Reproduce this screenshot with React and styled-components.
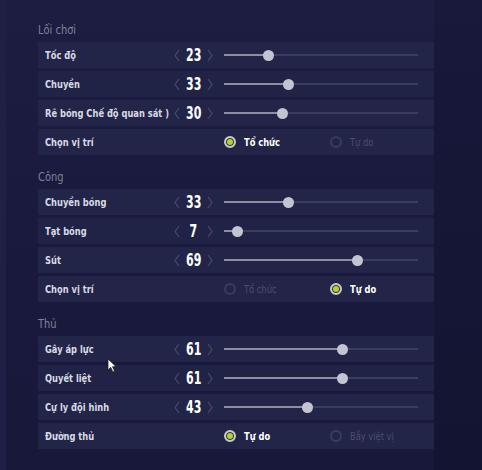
import React from 'react';
import styled, { createGlobalStyle } from 'styled-components';

const GlobalStyle = createGlobalStyle`
  html, body {
    margin: 0;
    padding: 0;
    background: #16173a;
  }
  body {
    font-family: "DejaVu Sans Condensed", "DejaVu Sans", sans-serif;
  }
`;

const sections = [
  {
    title: 'Lối chơi',
    rows: [
      { label: 'Tốc độ', value: 23 },
      { label: 'Chuyền', value: 33 },
      { label: 'Rê bóng Chế độ quan sát )', value: 30 },
    ],
    choice: { label: 'Chọn vị trí', options: ['Tổ chức', 'Tự do'], selected: 0 },
  },
  {
    title: 'Công',
    rows: [
      { label: 'Chuyền bóng', value: 33 },
      { label: 'Tạt bóng', value: 7 },
      { label: 'Sút', value: 69 },
    ],
    choice: { label: 'Chọn vị trí', options: ['Tổ chức', 'Tự do'], selected: 1 },
  },
  {
    title: 'Thủ',
    rows: [
      { label: 'Gây áp lực', value: 61 },
      { label: 'Quyết liệt', value: 61 },
      { label: 'Cự ly đội hình', value: 43 },
    ],
    choice: { label: 'Đường thủ', options: ['Tự do', 'Bẫy việt vị'], selected: 0 },
  },
];

const Page = styled.div`
  position: relative;
  display: flex;
  width: 482px;
  height: 470px;
  overflow: hidden;
`;

const Panel = styled.div`
  width: 434px;
  padding: 20px 0 0 32px;
  box-sizing: border-box;
  background: linear-gradient(180deg, #1c1d41 0%, #19193d 60%, #17183a 100%);
  border-left: 6px solid #1f2045;
`;

const Side = styled.div`
  flex: 1;
  background: linear-gradient(180deg, #18193b 0%, #131431 100%);
`;

const Section = styled.section`
  margin-bottom: 12px;
`;

const Title = styled.div`
  height: 22px;
  line-height: 20px;
  color: #7f8199;
  font-size: 12.5px;
  transform: scaleX(0.88);
  transform-origin: left center;
`;

const Rows = styled.div`
  display: flex;
  flex-direction: column;
  gap: 3px;
`;

const Row = styled.div`
  display: grid;
  grid-template-columns: 125px 54px 1fr;
  align-items: center;
  height: 26px;
  padding-left: 7px;
  background: ${(p) => (p.alt ? '#212346' : '#232548')};
`;

const Label = styled.span`
  color: #d9dae4;
  font-size: 11px;
  font-weight: bold;
  white-space: nowrap;
  display: inline-block;
  transform: scaleX(0.84);
  transform-origin: left center;
`;

const Stepper = styled.div`
  display: flex;
  align-items: center;
  justify-content: space-between;
  padding: 0 11px 0 4px;
`;

const Value = styled.span`
  color: #ffffff;
  font-size: 17px;
  font-weight: bold;
  display: inline-block;
  transform: scaleX(0.72);
  line-height: 1;
`;

const SliderWrap = styled.div`
  position: relative;
  height: 12px;
  margin-right: 16px;
  display: flex;
  align-items: center;
`;

const Track = styled.div`
  width: 100%;
  height: 2px;
  background: #3b3d60;
  position: relative;
`;

const Fill = styled.div`
  height: 100%;
  background: #8c8ea3;
`;

const Thumb = styled.div`
  position: absolute;
  top: 50%;
  width: 11px;
  height: 11px;
  margin: -5.5px 0 0 -5.5px;
  border-radius: 50%;
  background: #c3c4d1;
`;

const Options = styled.div`
  display: flex;
`;

const Option = styled.div`
  width: 106px;
  display: flex;
  align-items: center;
`;

const Dot = styled.span`
  width: 8px;
  height: 8px;
  border-radius: 50%;
  border: 2px solid ${(p) => (p.on ? '#c9cac8' : '#3a3c5e')};
  background: ${(p) => (p.on ? '#b3d232' : 'transparent')};
  box-shadow: ${(p) => (p.on ? 'inset 0 0 0 1px #2b2d44' : 'none')};
  flex-shrink: 0;
`;

const OptionText = styled.span`
  color: ${(p) => (p.on ? '#ffffff' : '#4b4d6f')};
  font-size: 11px;
  font-weight: ${(p) => (p.on ? 'bold' : 'normal')};
  display: inline-block;
  white-space: nowrap;
  transform: scaleX(0.84);
  transform-origin: left center;
  margin-left: 8px;
`;

const Cursor = styled.svg`
  position: absolute;
  left: 107px;
  top: 358px;
`;

function Chevron({ dir }) {
  const pts = dir === 'left' ? '5,1 1,6.5 5,12' : '1,1 5,6.5 1,12';
  return (
    <svg width="6" height="13" viewBox="0 0 6 13">
      <polyline points={pts} fill="none" stroke="#484a6d" strokeWidth="1.2" />
    </svg>
  );
}

function SliderRow({ label, value, alt }) {
  return (
    <Row alt={alt}>
      <Label>{label}</Label>
      <Stepper>
        <Chevron dir="left" />
        <Value>{value}</Value>
        <Chevron dir="right" />
      </Stepper>
      <SliderWrap>
        <Track>
          <Fill style={{ width: `${value}%` }} />
        </Track>
        <Thumb style={{ left: `${value}%` }} />
      </SliderWrap>
    </Row>
  );
}

function ChoiceRow({ label, options, selected }) {
  return (
    <Row>
      <Label>{label}</Label>
      <span />
      <Options>
        {options.map((opt, i) => (
          <Option key={opt}>
            <Dot on={i === selected} />
            <OptionText on={i === selected}>{opt}</OptionText>
          </Option>
        ))}
      </Options>
    </Row>
  );
}

export default function App() {
  return (
    <Page>
      <GlobalStyle />
      <Panel>
        {sections.map((s) => (
          <Section key={s.title}>
            <Title>{s.title}</Title>
            <Rows>
              {s.rows.map((r, i) => (
                <SliderRow key={r.label} label={r.label} value={r.value} alt={i % 2 === 1} />
              ))}
              <ChoiceRow {...s.choice} />
            </Rows>
          </Section>
        ))}
      </Panel>
      <Side />
      <Cursor width="10" height="15" viewBox="0 0 10 15">
        <path d="M1 1 L1 12 L3.8 9.4 L5.8 14 L7.6 13.2 L5.6 8.8 L9 8.6 Z" fill="#ffffff" stroke="#222" strokeWidth="0.8" />
      </Cursor>
    </Page>
  );
}
